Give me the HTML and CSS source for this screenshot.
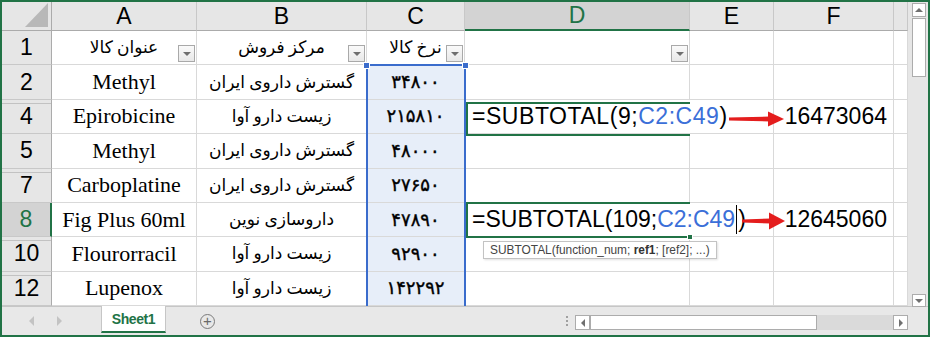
FILE: index.html
```html
<!DOCTYPE html>
<html lang="fa">
<head>
    <meta charset="UTF-8">
    <title>SUBTOTAL</title>
    <link rel="stylesheet" href="styles.css">
</head>
<body>

<div class="excel">
    <div class="main">
        <div class="sheet">
            <!-- column headers -->
            <div class="hd corner"></div>
            <div class="hd">A</div>
            <div class="hd">B</div>
            <div class="hd">C</div>
            <div class="hd on">D</div>
            <div class="hd">E</div>
            <div class="hd">F</div>
            <div class="hd"></div>

            <!-- row 1 -->
            <div class="rh">1</div>
            <div class="cell fa">عنوان کالا<span class="filter"></span></div>
            <div class="cell fa">مرکز فروش<span class="filter"></span></div>
            <div class="cell fa">نرخ کالا<span class="filter"></span></div>
            <div class="cell"><span class="filter"></span></div>
            <div class="cell"></div>
            <div class="cell"></div>
            <div class="cell"></div>

            <!-- row 2 -->
            <div class="rh">2</div>
            <div class="cell en">Methyl</div>
            <div class="cell fa">گسترش داروی ایران</div>
            <div class="cell fa num sel">۳۴۸۰۰</div>
            <div class="cell"></div>
            <div class="cell"></div>
            <div class="cell"></div>
            <div class="cell"></div>

            <!-- row 4 -->
            <div class="rh gap">4</div>
            <div class="cell en">Epirobicine</div>
            <div class="cell fa">زیست دارو آوا</div>
            <div class="cell fa num sel">۲۱۵۸۱۰</div>
            <div class="cell formula wide">=SUBTOTAL(9;<span class="ref">C2:C49</span>)</div>
            <div class="cell"></div>
            <div class="cell val">16473064</div>
            <div class="cell"></div>

            <!-- row 5 -->
            <div class="rh">5</div>
            <div class="cell en">Methyl</div>
            <div class="cell fa">گسترش داروی ایران</div>
            <div class="cell fa num sel">۴۸۰۰۰</div>
            <div class="cell"></div>
            <div class="cell"></div>
            <div class="cell"></div>
            <div class="cell"></div>

            <!-- row 7 -->
            <div class="rh gap">7</div>
            <div class="cell en">Carboplatine</div>
            <div class="cell fa">گسترش داروی ایران</div>
            <div class="cell fa num sel">۲۷۶۵۰</div>
            <div class="cell"></div>
            <div class="cell"></div>
            <div class="cell"></div>
            <div class="cell"></div>

            <!-- row 8 (active) -->
            <div class="rh on">8</div>
            <div class="cell en">Fig Plus 60ml</div>
            <div class="cell fa">داروسازی نوین</div>
            <div class="cell fa num sel">۴۷۸۹۰</div>
            <div class="cell formula">=SUBTOTAL(109;<span class="ref">C2:C49</span><span class="caret"></span>)</div>
            <div class="cell"></div>
            <div class="cell val">12645060</div>
            <div class="cell"></div>

            <!-- row 10 -->
            <div class="rh gap">10</div>
            <div class="cell en">Flourorracil</div>
            <div class="cell fa">زیست دارو آوا</div>
            <div class="cell fa num sel">۹۲۹۰۰</div>
            <div class="cell"></div>
            <div class="cell"></div>
            <div class="cell"></div>
            <div class="cell"></div>

            <!-- row 12 -->
            <div class="rh gap">12</div>
            <div class="cell en">Lupenox</div>
            <div class="cell fa">زیست دارو آوا</div>
            <div class="cell fa num sel">۱۴۲۲۹۲</div>
            <div class="cell"></div>
            <div class="cell"></div>
            <div class="cell"></div>
            <div class="cell"></div>

            <!-- things drawn over the grid -->
            <div class="selection">
                <span class="handle left"></span>
                <span class="handle right"></span>
            </div>
            <div class="edit-box d4"></div>
            <div class="edit-box d8"><span class="fill-handle"></span></div>

            <svg class="arrow a4" width="56" height="20" viewBox="0 0 56 20">
                <path d="M0 8.6 L41 7.6 L41 12.4 L0 11.4 Z" />
                <path d="M39 2.5 L55 10 L39 17.5 Z" />
            </svg>
            <svg class="arrow a8" width="44" height="20" viewBox="0 0 44 20">
                <path d="M0 8.4 L29 7.4 L29 12.6 L0 11.6 Z" />
                <path d="M27 1.5 L43 10 L27 18.5 Z" />
            </svg>

            <div class="tooltip">SUBTOTAL(function_num; <b>ref1</b>; [ref2]; ...)</div>
        </div>

        <div class="vscroll">
            <div class="sbtn up"></div>
            <div class="vthumb"></div>
            <div class="vspace"></div>
            <div class="sbtn down"></div>
        </div>
    </div>

    <div class="tabbar">
        <div class="nav">
            <span class="nav-left"></span>
            <span class="nav-right"></span>
        </div>
        <div class="tab">Sheet1</div>
        <div class="add">+</div>
        <div class="spacer"></div>
        <div class="dots"><i></i><i></i><i></i></div>
        <div class="hscroll">
            <div class="sbtn left"></div>
            <div class="hthumb"></div>
            <div class="htrack"></div>
            <div class="sbtn right"></div>
        </div>
        <div class="corner-gap"></div>
    </div>
</div>

</body>
</html>
```

FILE: styles.css
```css
* {
    box-sizing: border-box;
}
body {
    margin: 0;
    background: #fff;
}
.excel {
    width: 930px;
    height: 337px;
    border: 2px solid #217346;
    display: flex;
    flex-direction: column;
    overflow: hidden;
    font-family: "Liberation Sans", Arial, sans-serif;
    color: #000;
}
.main {
    display: flex;
    height: 304px;
}

/* grid */
.sheet {
    position: relative;
    width: 906px;
    display: grid;
    grid-template-columns: 50px 145px 170px 98px 225px 84px 120px 14px;
    grid-template-rows: 29px repeat(8, 34.375px);
    overflow: hidden;
    background: #fff;
}
.hd {
    background: #e6e6e6;
    border-right: 1px solid #c8c8c8;
    border-bottom: 1px solid #ababab;
    display: flex;
    align-items: center;
    justify-content: center;
    font-size: 23px;
}
.hd.on {
    background: #d3d3d3;
    color: #217346;
    border-bottom: 2px solid #217346;
}
.corner {
    position: relative;
    border-right-color: #ababab;
}
.corner::after {
    content: "";
    position: absolute;
    right: 3px;
    bottom: 3px;
    width: 23px;
    height: 24px;
    background: #b8b8b8;
    clip-path: polygon(100% 0, 100% 100%, 0 100%);
}
.rh {
    position: relative;
    background: #e6e6e6;
    border-right: 1px solid #ababab;
    border-bottom: 1px solid #c8c8c8;
    display: flex;
    align-items: center;
    justify-content: center;
    font-size: 23px;
}
.rh.gap::before {
    content: "";
    position: absolute;
    top: 3px;
    left: 0;
    right: 0;
    height: 1px;
    background: #c2c2c2;
}
.rh.on {
    background: #d3d3d3;
    color: #217346;
    border-right: 2px solid #217346;
}
.cell {
    position: relative;
    border-right: 1px solid #d9d9d9;
    border-bottom: 1px solid #d9d9d9;
    display: flex;
    align-items: center;
    justify-content: center;
    white-space: nowrap;
}
.cell.en {
    font-family: "Liberation Serif", "Times New Roman", serif;
    font-size: 22px;
}
.cell.fa {
    font-family: "Liberation Serif", "DejaVu Sans", serif;
    font-size: 17px;
    direction: rtl;
}
.cell.num {
    font-size: 18px;
    -webkit-text-stroke: 0.4px #000;
}
.cell.sel {
    background: #e7eef9;
}
.cell.formula {
    justify-content: flex-start;
    padding-left: 7px;
    font-size: 23px;
    border-right: none;
    overflow: visible;
}
.cell.formula.wide {
    letter-spacing: 0.55px;
}
.cell.val {
    justify-content: flex-end;
    padding-right: 6px;
    font-size: 23px;
}
.ref {
    color: #3b6fd8;
}
.caret {
    display: inline-block;
    width: 0;
    height: 29px;
    border-left: 1px solid #000;
    vertical-align: middle;
    margin: 0 1px;
}

/* autofilter buttons */
.filter {
    position: absolute;
    right: 1px;
    bottom: 2px;
    width: 17px;
    height: 17px;
    border: 1px solid #a9a9a9;
    background: linear-gradient(#fafafa, #e8e8e8);
}
.filter::after {
    content: "";
    position: absolute;
    left: 4px;
    top: 6px;
    border-left: 4px solid transparent;
    border-right: 4px solid transparent;
    border-top: 4px solid #6e6e6e;
}

/* overlays */
.selection {
    position: absolute;
    left: 364px;
    top: 62px;
    width: 100px;
    height: 260px;
    border: 2px solid #3a6ccc;
    border-bottom: none;
}
.handle {
    position: absolute;
    top: -4px;
    width: 7px;
    height: 7px;
    background: #3a6ccc;
    border: 1px solid #fff;
}
.handle.left {
    left: -5px;
}
.handle.right {
    right: -5px;
}
.edit-box {
    position: absolute;
    left: 464px;
    width: 224px;
    border: 2px solid #217346;
    border-right: none;
}
.edit-box.d4 {
    top: 100px;
    height: 34px;
}
.edit-box.d8 {
    top: 200px;
    height: 36px;
}
.fill-handle {
    position: absolute;
    right: -3px;
    bottom: -4px;
    width: 6px;
    height: 6px;
    background: #217346;
    border: 1px solid #fff;
}
.arrow {
    position: absolute;
    fill: #e41d1d;
}
.arrow.a4 {
    left: 727px;
    top: 107px;
}
.arrow.a8 {
    left: 740px;
    top: 209px;
}
.tooltip {
    position: absolute;
    left: 481px;
    top: 239px;
    width: 234px;
    height: 18px;
    padding: 0 6px;
    border: 1px solid #c3c3c3;
    background: #fff;
    box-shadow: 1px 1px 2px rgba(0, 0, 0, 0.12);
    font-size: 11.9px;
    line-height: 16px;
    color: #444;
    white-space: nowrap;
}
.tooltip b {
    color: #333;
}

/* scroll bars */
.vscroll {
    width: 20px;
    background: #e6e6e6;
    display: flex;
    flex-direction: column;
    align-items: center;
    padding: 1px 0 0 2px;
}
.sbtn {
    position: relative;
    width: 14px;
    height: 14px;
    background: #fff;
    border: 1px solid #acacac;
}
.sbtn::after {
    content: "";
    position: absolute;
    left: 50%;
    top: 50%;
    transform: translate(-50%, -50%);
}
.sbtn.up::after {
    border-left: 4px solid transparent;
    border-right: 4px solid transparent;
    border-bottom: 4px solid #707070;
}
.sbtn.down::after {
    border-left: 4px solid transparent;
    border-right: 4px solid transparent;
    border-top: 4px solid #707070;
}
.sbtn.left::after {
    border-top: 4px solid transparent;
    border-bottom: 4px solid transparent;
    border-right: 4px solid #707070;
}
.sbtn.right::after {
    border-top: 4px solid transparent;
    border-bottom: 4px solid transparent;
    border-left: 4px solid #707070;
}
.vthumb {
    width: 14px;
    height: 59px;
    margin-top: 1px;
    background: #fff;
    border: 1px solid #acacac;
}
.vspace {
    flex: 1;
}
.sbtn.down {
    height: 13px;
    margin-bottom: -1px;
}

/* sheet tabs */
.tabbar {
    height: 29px;
    background: #e8e8e8;
    border-top: 1px solid #c6c6c6;
    display: flex;
}
.nav {
    width: 99px;
    display: flex;
    align-items: center;
    gap: 23px;
    padding-left: 27px;
}
.nav-left {
    border-top: 5px solid transparent;
    border-bottom: 5px solid transparent;
    border-right: 5px solid #c3c3c3;
}
.nav-right {
    border-top: 5px solid transparent;
    border-bottom: 5px solid transparent;
    border-left: 5px solid #c3c3c3;
}
.tab {
    width: 65px;
    height: 27px;
    margin-top: -1px;
    background: #fff;
    border-left: 1px solid #c6c6c6;
    border-right: 1px solid #c6c6c6;
    border-bottom: 2px solid #217346;
    color: #217346;
    font-weight: bold;
    font-size: 14px;
    letter-spacing: -0.4px;
    display: flex;
    align-items: center;
    justify-content: center;
    padding-top: 1px;
}
.add {
    width: 15px;
    height: 15px;
    margin: 7px 0 0 34px;
    border: 1px solid #7a7a7a;
    border-radius: 50%;
    color: #6a6a6a;
    font-size: 15px;
    line-height: 12px;
    text-align: center;
}
.spacer {
    flex: 1;
}
.dots {
    width: 17px;
    display: flex;
    flex-direction: column;
    align-items: center;
    gap: 2px;
    padding-top: 9px;
}
.dots i {
    width: 2px;
    height: 2px;
    background: #a0a0a0;
}
.hscroll {
    width: 333px;
    height: 15px;
    margin-top: 8px;
    display: flex;
}
.sbtn.left,
.sbtn.right {
    width: 15px;
    height: 15px;
}
.hthumb {
    width: 227px;
    background: #fff;
    border: 1px solid #acacac;
}
.htrack {
    flex: 1;
    background: #dadada;
}
.corner-gap {
    width: 20px;
}
```
